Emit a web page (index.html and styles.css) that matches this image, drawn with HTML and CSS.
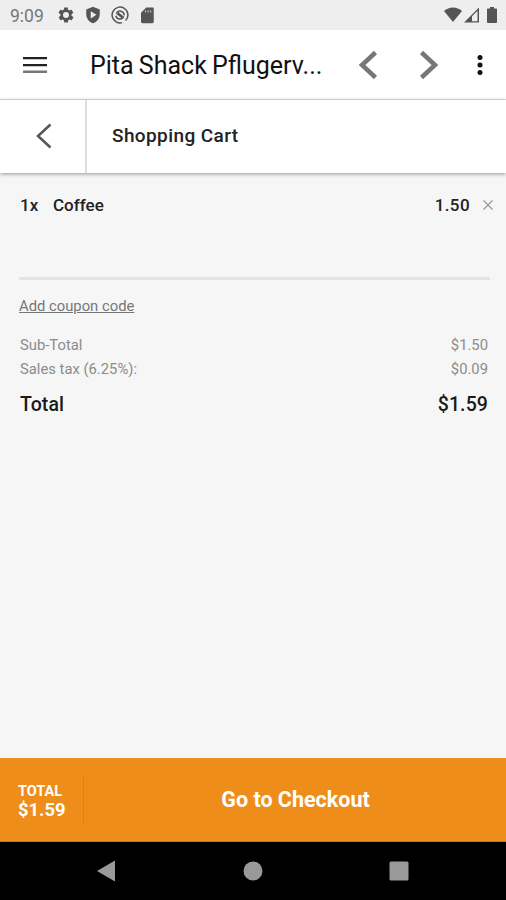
FILE: index.html
```html
<!DOCTYPE html>
<html lang="en">
<head>
    <meta charset="UTF-8">
    <meta name="viewport" content="width=device-width, initial-scale=1.0">
    <title>Shopping Cart</title>
    <link rel="stylesheet" href="styles.css">
</head>
<body>
    <div class="status-bar">
        <span class="clock">9:09</span>
        <div class="status-left">
            <svg width="18" height="18" viewBox="0 0 24 24"><path fill-rule="evenodd" d="M19.4 13a7.5 7.5 0 0 0 0-2l2.1-1.6c.2-.2.3-.4.1-.7l-2-3.4c-.1-.2-.4-.3-.6-.2l-2.5 1a7.3 7.3 0 0 0-1.7-1l-.4-2.6c0-.3-.2-.5-.5-.5h-4c-.3 0-.5.2-.5.5l-.4 2.6c-.6.3-1.2.6-1.7 1l-2.5-1c-.2-.1-.5 0-.6.2l-2 3.4c-.1.3-.1.5.1.7L4.6 11a7.5 7.5 0 0 0 0 2l-2.1 1.6c-.2.2-.3.4-.1.7l2 3.4c.1.2.4.3.6.2l2.5-1c.5.4 1.1.8 1.7 1l.4 2.6c0 .3.2.5.5.5h4c.3 0 .5-.2.5-.5l.4-2.6c.6-.3 1.2-.6 1.7-1l2.5 1c.2.1.5 0 .6-.2l2-3.4c.1-.3.1-.5-.1-.7zM12 16a4 4 0 1 1 0-8 4 4 0 0 1 0 8z"/></svg>
            <svg width="18" height="18" viewBox="0 0 24 24"><path fill-rule="evenodd" d="M12 1 3 4.5V11c0 5.5 3.8 10.5 9 12 5.2-1.5 9-6.5 9-12V4.5zM9 7l7.5 4.7L9 16.5z"/></svg>
            <svg width="18" height="18" viewBox="0 0 24 24" class="line-icon"><circle cx="12" cy="12" r="10.5" stroke-dasharray="60 6" transform="rotate(75 12 12)"/><path d="M7 10a5.5 5.5 0 0 1 10.5 2.5M17 14a5.5 5.5 0 0 1-10.5-1"/><path class="line-thick" d="M8.5 9.5l7 5.5"/></svg>
            <svg width="18" height="18" viewBox="0 0 24 24"><path fill-rule="evenodd" d="M20 2h-9L4 9v12c0 1 .8 2 2 2h13c1.2 0 2-1 2-2V4c0-1.2-.3-2-1-2zM9.5 5.5h1v3h-1zm3.5 0h1v3h-1zm3.5 0h1v3h-1z"/></svg>
        </div>
        <div class="status-right">
            <svg width="18" height="16" viewBox="0 0 18 16"><path d="M0 4C5-.8 13-.8 18 4L9 15z"/></svg>
            <svg width="16" height="16" viewBox="0 0 16 16"><path fill-rule="evenodd" d="M0 15.5 15 .5v15zM8 9.2v5h5.5V3.7z"/></svg>
            <svg width="10" height="16" viewBox="0 0 10 16"><path d="M3 0h4v1.5h2c.6 0 1 .4 1 1V15c0 .6-.4 1-1 1H1c-.6 0-1-.4-1-1V2.5c0-.6.4-1 1-1h2z"/></svg>
        </div>
    </div>

    <header class="toolbar">
        <svg class="menu" width="24" height="18" viewBox="0 0 24 18"><path d="M0 1h24v2.2H0zM0 8h24v2.2H0z"/><path class="menu-last" d="M0 14.5h24V17H0z"/></svg>
        <h1 class="title">Pita Shack Pflugerv...</h1>
        <svg class="arrow" width="20" height="30" viewBox="0 0 20 30"><path d="M17.5 2.5 4 15l13.5 12.5"/></svg>
        <svg class="arrow arrow-next" width="20" height="30" viewBox="0 0 20 30"><path d="M2.5 2.5 16 15 2.5 27.5"/></svg>
        <svg class="more" width="6" height="20" viewBox="0 0 6 20"><circle cx="3" cy="2.5" r="2.5"/><circle cx="3" cy="10" r="2.5"/><circle cx="3" cy="17.5" r="2.5"/></svg>
    </header>

    <div class="sub-header">
        <div class="back">
            <svg width="16" height="26" viewBox="0 0 16 26"><path d="M14.5 1.5 2 13l12.5 11.5"/></svg>
        </div>
        <h2>Shopping Cart</h2>
    </div>

    <main class="cart">
        <div class="cart-item">
            <span class="qty">1x</span>
            <span class="name">Coffee</span>
            <span class="price">1.50</span>
            <svg class="remove" width="10" height="10" viewBox="0 0 10 10"><path d="M.5.5l9 9M9.5.5l-9 9"/></svg>
        </div>

        <div class="summary">
            <a class="coupon">Add coupon code</a>
            <div class="row"><span>Sub-Total</span><span>$1.50</span></div>
            <div class="row"><span>Sales tax (6.25%):</span><span>$0.09</span></div>
            <div class="row total"><span>Total</span><span>$1.59</span></div>
        </div>
    </main>

    <footer class="checkout">
        <div class="checkout-total">
            <span class="label">TOTAL</span>
            <span class="amount">$1.59</span>
        </div>
        <div class="checkout-btn">Go to Checkout</div>
    </footer>

    <nav class="nav-bar">
        <svg width="20" height="22" viewBox="0 0 20 22"><path d="M19 .5v21L1 11z"/></svg>
        <svg width="20" height="20" viewBox="0 0 20 20"><circle cx="10" cy="10" r="9.5"/></svg>
        <svg width="20" height="20" viewBox="0 0 20 20"><rect x=".5" y=".5" width="19" height="19" rx="1.5"/></svg>
    </nav>
</body>
</html>
```

FILE: styles.css
```css
* {
    box-sizing: border-box;
}

body {
    margin: 0;
    height: 900px;
    display: flex;
    flex-direction: column;
    overflow: hidden;
    background-color: #f6f6f6;
    font-family: Roboto, "Liberation Sans", sans-serif;
    color: #222;
}

svg {
    display: block;
    flex: none;
}

h1, h2 {
    margin: 0;
}

.status-bar {
    height: 30px;
    display: flex;
    align-items: center;
    padding: 0 9px 0 10px;
    background-color: #eee;
    fill: #555;
}

.clock {
    width: 47px;
    padding-top: 1px;
    font-size: 17.5px;
    color: #777;
}

.status-left {
    display: flex;
    gap: 9px;
}

.line-icon {
    fill: none;
    stroke: #555;
    stroke-width: 2;
}

.line-thick {
    stroke-width: 3.5;
}

.status-right {
    display: flex;
    margin-left: auto;
}

.status-right svg:nth-child(2) {
    margin: 0 7px 0 2px;
}

.toolbar {
    height: 70px;
    display: flex;
    align-items: center;
    padding: 0 23px;
    background-color: #fff;
    border-bottom: 1px solid #e0e0e0;
}

.menu {
    fill: #222;
}

.menu-last {
    fill: #777;
}

.title {
    width: 268px;
    margin-left: 43px;
    padding-top: 2px;
    font-size: 25px;
    font-weight: 400;
    word-spacing: -1px;
    color: #111;
    white-space: nowrap;
}

.arrow {
    fill: none;
    stroke: #777;
    stroke-width: 4.5;
}

.arrow-next {
    margin-left: 41px;
}

.more {
    margin-left: auto;
    fill: #111;
}

.sub-header {
    height: 73px;
    display: flex;
    background-color: #fff;
    box-shadow: 0 1px 4px rgba(0, 0, 0, 0.4);
}

.back {
    width: 87px;
    display: flex;
    align-items: center;
    justify-content: center;
    padding: 0 0 1px 2px;
    border-right: 2px solid #ddd;
    fill: none;
    stroke: #555;
    stroke-width: 2.5;
}

.sub-header h2 {
    padding-left: 25px;
    font-size: 19px;
    font-weight: 500;
    letter-spacing: 0.4px;
    line-height: 71px;
}

.cart {
    flex: 1;
    padding: 22px 16px 0 19px;
}

.cart-item {
    height: 82px;
    display: flex;
    margin-right: -5px;
    font-size: 17px;
    font-weight: 500;
    line-height: 21px;
}

.qty {
    width: 34px;
    padding-left: 1px;
}

.price {
    margin-left: auto;
    letter-spacing: 0.4px;
}

.remove {
    margin: 5px 2px 0 13px;
    stroke: #999;
    stroke-width: 1.3;
}

.summary {
    border-top: 3px solid #e3e3e3;
    padding-top: 14px;
}

.coupon {
    display: block;
    margin-bottom: 15px;
    font-size: 14.8px;
    line-height: 24px;
    color: #777;
    text-decoration: underline;
}

.row {
    display: flex;
    justify-content: space-between;
    padding: 0 2px 0 1px;
    font-size: 14.8px;
    line-height: 24px;
    color: #8c8c8c;
}

.total {
    margin-top: 9px;
    font-size: 19.5px;
    font-weight: 500;
    letter-spacing: 0.1px;
    line-height: 30px;
    color: #1a1a1a;
}

.checkout {
    height: 84px;
    display: flex;
    align-items: center;
    background-color: #ef8d1a;
    border-bottom: 1px solid #c97717;
    color: #fff;
}

.checkout-total {
    width: 84px;
    height: 48px;
    display: flex;
    flex-direction: column;
    justify-content: center;
    padding: 2px 0 0 18px;
    border-right: 1px solid #e07f12;
    font-weight: 700;
}

.label {
    font-size: 14.5px;
    line-height: 17px;
}

.amount {
    font-size: 18.4px;
    line-height: 19px;
}

.checkout-btn {
    flex: 1;
    padding: 0 0 1px 1px;
    text-align: center;
    font-size: 21.5px;
    font-weight: 700;
}

.nav-bar {
    height: 58px;
    display: flex;
    align-items: center;
    justify-content: space-between;
    padding: 0 97px 0 96px;
    background-color: #000;
    fill: #999;
}
```
